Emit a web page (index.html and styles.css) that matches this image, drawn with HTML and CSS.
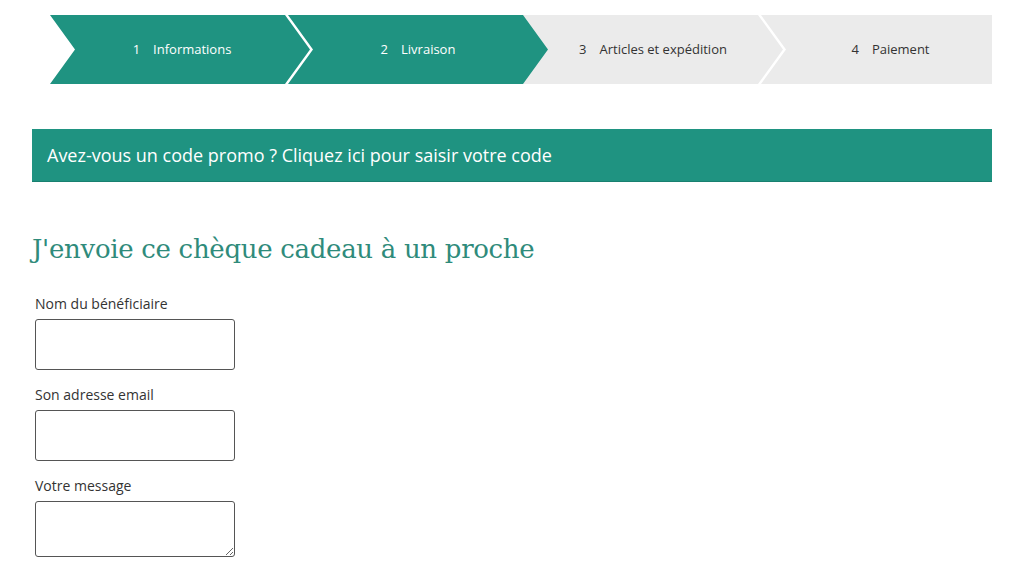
FILE: index.html
```html
<!DOCTYPE html>
<html lang="fr">
<head>
    <meta charset="UTF-8">
    <meta name="viewport" content="width=device-width, initial-scale=1.0">
    <title>Commande - chèque cadeau</title>
    <link rel="stylesheet" href="styles.css">
</head>
<body>
    <div class="page">
        <ol class="steps">
            <li class="step step-first done"><span class="num">1</span>Informations</li>
            <li class="step done"><span class="num">2</span>Livraison</li>
            <li class="step"><span class="num">3</span>Articles et expédition</li>
            <li class="step step-last"><span class="num">4</span>Paiement</li>
        </ol>

        <div class="promo">Avez-vous un code promo ? Cliquez ici pour saisir votre code</div>

        <h2 class="title">J'envoie ce chèque cadeau à un proche</h2>

        <form class="gift-form">
            <label for="name">Nom du bénéficiaire</label>
            <input type="text" id="name">

            <label for="email">Son adresse email</label>
            <input type="email" id="email">

            <label for="message">Votre message</label>
            <textarea id="message"></textarea>
        </form>
    </div>
</body>
</html>
```

FILE: styles.css
```css
body { margin: 0; font-family: "Open Sans", Arial, sans-serif; color: #333; background: #fff; }
.page { width: 960px; margin-left: 32px; padding-top: 15px; }

.steps { list-style: none; margin: 0 0 45px 18px; padding: 0; display: flex; height: 69px; }
.step { width: 260px; flex-shrink: 0; margin-left: -22px; display: flex; align-items: center; justify-content: center; padding-bottom: 2px; box-sizing: border-box; font-size: 13px; background: #ebebeb; color: #333;
    clip-path: polygon(0 0, calc(100% - 25px) 0, 100% 50%, calc(100% - 25px) 100%, 0 100%, 25px 50%); }
.step-first { margin-left: 0; padding-left: 4px; }
.step-last { flex: 1; width: auto; padding-left: 28px; clip-path: polygon(0 0, 100% 0, 100% 100%, 0 100%, 25px 50%); }
.step.done { background: #1f9381; color: #fff; }
.step.done + .step:not(.done) { margin-left: -25px; clip-path: polygon(0 0, calc(100% - 25px) 0, 100% 50%, calc(100% - 25px) 100%, 0 100%); position: relative; z-index: -1; }
.num { margin-right: 13px; }

.promo { background: #1f9381; color: #fff; font-size: 18px; height: 53px; line-height: 52px; padding-left: 15px; border-bottom: 1px solid #188070; box-sizing: border-box; }

.title { font-family: "DejaVu Serif", "Liberation Serif", serif; font-weight: normal; color: #2f8b7b; font-size: 26px; margin: 52px 0 30px; letter-spacing: -0.3px; }

.gift-form { display: flex; flex-direction: column; align-items: flex-start; padding-left: 3px; }
.gift-form label { font-size: 14px; line-height: 20px; margin-bottom: 5px; }
.gift-form input, .gift-form textarea { width: 200px; height: 51px; box-sizing: border-box; border: 1px solid #555; border-radius: 3px; margin: 0 0 15px; font-family: inherit; }
.gift-form textarea { height: 56px; }
```
